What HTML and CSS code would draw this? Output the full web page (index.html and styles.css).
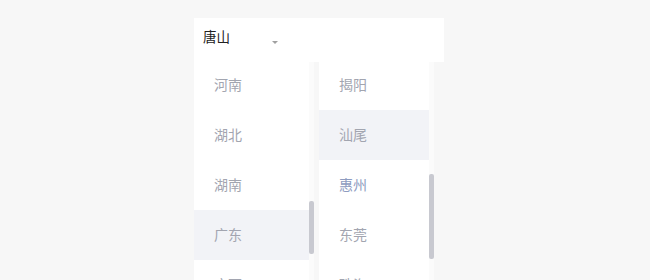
FILE: index.html
```html
<!DOCTYPE html>
<html lang="zh">
<head>
<meta charset="utf-8">
<link rel="stylesheet" href="styles.css">
</head>
<body>
<div class="wrap">
  <div class="select">
    <span class="value">唐山</span>
    <span class="arrow"></span>
  </div>
  <div class="cols">
    <div class="col col-left">
      <ul class="list">
        <li class="item">河南</li>
        <li class="item">湖北</li>
        <li class="item">湖南</li>
        <li class="item item-hover">广东</li>
        <li class="item">广西</li>
      </ul>
      <div class="track"><div class="thumb thumb-left"></div></div>
    </div>
    <div class="col col-right">
      <ul class="list">
        <li class="item">揭阳</li>
        <li class="item item-hover">汕尾</li>
        <li class="item item-active">惠州</li>
        <li class="item">东莞</li>
        <li class="item">珠海</li>
      </ul>
      <div class="track"><div class="thumb thumb-right"></div></div>
    </div>
  </div>
</div>
</body>
</html>
```

FILE: styles.css
```css
html, body {
  margin: 0;
  padding: 0;
  background: #f7f7f7;
  height: 280px;
  overflow: hidden;
  font-family: "Noto Sans CJK SC", "Liberation Sans", sans-serif;
}
.wrap {
  padding: 18px 0 0 194px;
}
.select {
  width: 250px;
  height: 44px;
  background: #fff;
  display: flex;
  align-items: center;
  padding-left: 9px;
  box-sizing: border-box;
}
.value {
  font-size: 13.5px;
  color: #222;
  line-height: 1;
  margin-top: -6px;
}
.arrow {
  width: 0;
  height: 0;
  border-left: 3px solid transparent;
  border-right: 3px solid transparent;
  border-top: 3px solid #a0a0a0;
  margin-left: 42px;
  margin-top: 4px;
}
.cols {
  display: flex;
  gap: 5px;
  height: 218px;
  overflow: hidden;
}
.col {
  background: #fff;
  display: grid;
  overflow: hidden;
}
.col-left {
  width: 120px;
  grid-template-columns: 115px 5px;
}
.col-right {
  width: 115px;
  grid-template-columns: 110px 5px;
}
.list {
  list-style: none;
  margin: -2px 0 0 0;
  padding: 0;
}
.item {
  height: 50px;
  line-height: 48px;
  padding-left: 20px;
  font-size: 14px;
  color: #a2a5b0;
}
.item-hover {
  background: #f2f3f7;
}
.item-active {
  color: #8e9cc0;
}
.track {
  background: #fbfbfb;
}
.thumb {
  width: 5px;
  background: #c8c9d0;
  border-radius: 2px;
}
.thumb-left {
  margin-top: 139px;
  height: 53px;
}
.thumb-right {
  margin-top: 112px;
  height: 85px;
}
```
